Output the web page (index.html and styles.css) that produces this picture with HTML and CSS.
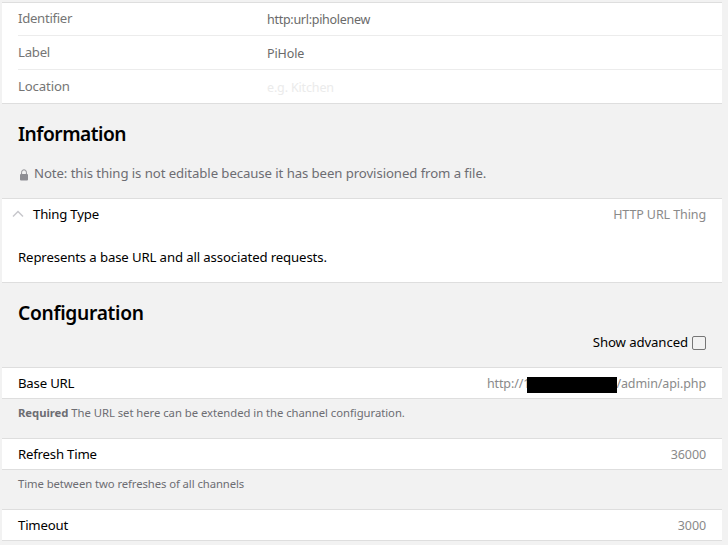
FILE: index.html
```html
<!DOCTYPE html>
<html lang="en">
<head>
<meta charset="utf-8">
<title>Thing</title>
<link rel="stylesheet" href="styles.css">
</head>
<body>
<main class="page">
  <section class="card fields">
    <div class="field"><span class="name">Identifier</span><span class="input">http:url:piholenew</span></div>
    <div class="field"><span class="name">Label</span><span class="input">PiHole</span></div>
    <div class="field"><span class="name">Location</span><span class="input placeholder">e.g. Kitchen</span></div>
  </section>
  <h2 class="title">Information</h2>
  <p class="note">
    <svg class="lock" width="8" height="12" viewBox="0 0 8 12"><path d="M1.6 6V3.2a2.4 2.4 0 0 1 4.8 0V6" fill="none" stroke="#8e8e93" stroke-width="1"/><rect y="5" width="8" height="6.5" rx="1" fill="#8e8e93"/></svg><span class="note-text">Note: this thing is not editable because it has been provisioned from a file.</span>
  </p>
  <section class="card type">
    <div class="type-head">
      <svg class="chevron" width="12" height="8" viewBox="0 0 12 8"><path d="M1 6.5L6 1.5L11 6.5" fill="none" stroke="#c7c7cc" stroke-width="1.5"/></svg>
      <span class="label">Thing Type</span><span class="value">HTTP URL Thing</span>
    </div>
    <p class="description"><span>Represents a base URL and all associated requests.</span></p>
  </section>
  <h2 class="title config">Configuration</h2>
  <label class="advanced"><span>Show advanced</span><input type="checkbox" class="check"></label>
  <section class="card row"><span class="label">Base URL</span><span class="value url"><span>http://1</span><i class="redacted"></i><span>/admin/api.php</span></span></section>
  <p class="help"><span><b>Required</b> The URL set here can be extended in the channel configuration.</span></p>
  <section class="card row"><span class="label">Refresh Time</span><span class="value">36000</span></section>
  <p class="help short"><span>Time between two refreshes of all channels</span></p>
  <section class="card row"><span class="label">Timeout</span><span class="value">3000</span></section>
</main>
</body>
</html>
```
FILE: styles.css
```css
* { box-sizing: border-box; margin: 0; padding: 0; }
body { background: #f2f2f2; color: #000; font: 13.2px/20px "Noto Sans", sans-serif; letter-spacing: -.1px; overflow: hidden; }
.page { width: 722px; padding: 2px 0 0 2px; }
.card { background: #fff; border-top: 1px solid #dedede; border-bottom: 1px solid #dedede; }
.fields { height: 102px; padding-left: 16px; }
.field { display: flex; height: 34px; padding-top: 6px; border-bottom: 1px solid #ececec; color: #757575; }
.field:first-child { height: 33px; padding-top: 5px; }
.field:last-child { border-bottom: 0; height: 33px; }
.name { width: 249px; letter-spacing: -.25px; }
.field:first-child .name { letter-spacing: -.3px; }
.field:last-child .name { letter-spacing: -.15px; }
.input { padding-top: 2px; color: #6a6a6a; font-size: 12.5px; letter-spacing: -.28px; }
.field:nth-child(2) .input { letter-spacing: -.1px; }
.input.placeholder { color: #ebebeb; letter-spacing: -.15px; }
.title { height: 60px; padding: 16px 16px 0; font-size: 19.2px; line-height: 28px; font-weight: 600; letter-spacing: -.5px; }
.note { display: flex; height: 34px; padding-left: 18px; color: #6d6d72; position: relative; top: -1px; letter-spacing: -.085px; }
.lock { margin: 6px 6px 0 0; }
.type { height: 85px; }
.type-head { display: flex; height: 30px; padding: 5px 16px 0 10px; }
.label { letter-spacing: -.2px; }
.chevron { margin: 6px 9px 0 0; }
.value { margin-left: auto; padding-top: 1px; color: #8a8a8a; font-size: 12.5px; }
.description { padding: 18px 16px 0; letter-spacing: -.13px; }
.title.config { height: 50px; letter-spacing: -.3px; }
.advanced { display: flex; justify-content: flex-end; height: 34px; padding-right: 16px; }
.advanced span { position: relative; top: -1px; }
.check { appearance: none; width: 14px; height: 14px; margin: 3px 0 0 4px; border: 1px solid #767676; border-radius: 2px; background: #f2f2f2; }
.row { display: flex; height: 32px; padding: 5px 16px 0; }
.url { display: flex; }
.redacted { width: 90px; height: 16px; margin: 3px -1px 0 -3px; background: #000; z-index: 1; }
.help { height: 39px; padding: 4px 16px 0; color: #6d6d72; font-size: 11.3px; letter-spacing: -.04px; }
.help.short { letter-spacing: -.08px; }
```
